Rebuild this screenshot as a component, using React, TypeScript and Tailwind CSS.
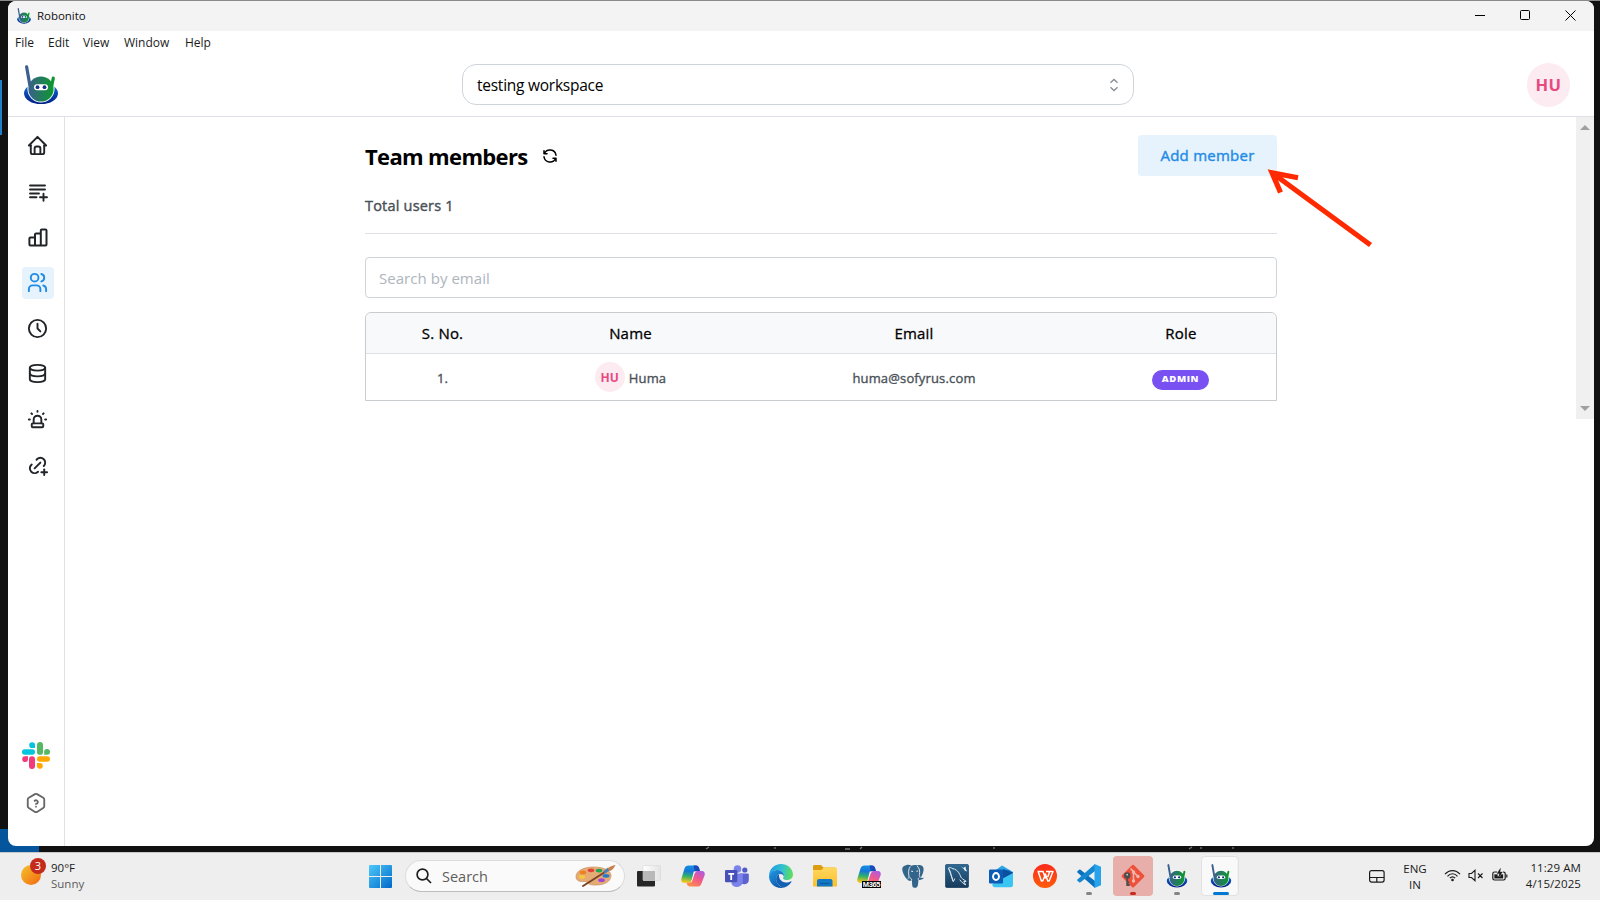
import React from 'react';
import { TbHome, TbUsers, TbClock, TbDatabase, TbUrgent, TbLinkPlus, TbHelpHexagon, TbRefresh } from 'react-icons/tb';

function Robot({ className }: { className: string }) {
  return (
    <svg className={className} viewBox="0 0 34 40" fill="none">
      <defs>
        <linearGradient id="head" x1="4" y1="0" x2="30" y2="0" gradientUnits="userSpaceOnUse">
          <stop stopColor="#3a5f8c" />
          <stop offset="1" stopColor="#0b9a2c" />
        </linearGradient>
        <linearGradient id="base" x1="0" y1="18" x2="0" y2="39" gradientUnits="userSpaceOnUse">
          <stop stopColor="#1473e0" />
          <stop offset="1" stopColor="#001f85" />
        </linearGradient>
      </defs>
      <ellipse cx="17" cy="28.3" rx="17" ry="10.8" fill="url(#base)" />
      <circle cx="17" cy="23.8" r="13.6" fill="#fff" />
      <path d="M2.6 1.8L6 21" stroke="#3b5f8f" strokeWidth="3.2" strokeLinecap="round" />
      <path d="M29.3 13l-2 10" stroke="#0f9430" strokeWidth="3.2" strokeLinecap="round" />
      <circle cx="17" cy="24" r="12.6" fill="url(#head)" />
      <rect x="10" y="19.2" width="14" height="6" rx="3" fill="#fff" />
      <circle cx="13.5" cy="22.2" r="1.9" fill="#12308a" />
      <circle cx="20.5" cy="22.2" r="1.9" fill="#12308a" />
    </svg>
  );
}

function PlaylistPlus() {
  return (
    <svg width="22" height="22" viewBox="0 0 22 22" fill="none" stroke="currentColor" strokeWidth="1.9" strokeLinecap="round">
      <path d="M3 4.500h15M3 8.500h15M3 12.500h9M3 16.200h6.500M16.500 12.800v7M13 16.300h7" />
    </svg>
  );
}

function Bars() {
  return (
    <svg width="22" height="22" viewBox="0 0 22 22" fill="none" stroke="currentColor" strokeWidth="2" strokeLinejoin="round">
      <path d="M2.400 12.400a1 1 0 0 1 1-1H8v8H3.400a1 1 0 0 1-1-1zM8 8.400a1 1 0 0 1 1-1h4.800v12H8zM13.800 4.400a1 1 0 0 1 1-1h3.700a1 1 0 0 1 1 1v14a1 1 0 0 1-1 1h-4.700z" />
    </svg>
  );
}

function Slack() {
  return (
    <svg width="28" height="27" viewBox="0 0 28 27">
      <g fill="#00c5dc">
        <rect x="0" y="7.200" width="13" height="5.600" rx="2.800" />
        <path d="M13 6H10.200a2.900 2.900 0 1 1 2.800-3z" />
      </g>
      <g fill="#54b962">
        <rect x="15" y="0" width="6" height="12.800" rx="2.900" />
        <path d="M22.200 12.800V10a2.900 2.900 0 1 1 3 2.800z" />
      </g>
      <g fill="#f23b7c">
        <rect x="7" y="14.200" width="6" height="12.800" rx="2.900" />
        <path d="M6 14.200V17a2.900 2.900 0 1 1-3-2.800z" />
      </g>
      <g fill="#ffa800">
        <rect x="15" y="14.200" width="13" height="5.600" rx="2.800" />
        <path d="M15 21h2.800a2.900 2.900 0 1 1-2.800 3z" />
      </g>
    </svg>
  );
}

function TaskView() {
  return (
    <svg width="24" height="24" viewBox="0 0 24 24">
      <defs><linearGradient id="tv" x2="1"><stop stopColor="#fff" /><stop offset="1" stopColor="#e4e4e4" /></linearGradient></defs>
      <rect x="0" y="6" width="18" height="15.500" rx="1" fill="#262626" />
      <rect x="6" y="0.500" width="17.500" height="15" rx="1" fill="url(#tv)" stroke="#d9d9d9" strokeWidth=".6" />
      <rect x="6" y="6" width="12" height="9.500" fill="#b9b9b9" />
    </svg>
  );
}

function CopilotMark() {
  return (
    <>
      <defs>
        <linearGradient id="cpa" x1="6" y1="1" x2="4" y2="18" gradientUnits="userSpaceOnUse">
          <stop stopColor="#1291e8" /><stop offset=".35" stopColor="#1478d4" /><stop offset=".65" stopColor="#2fb26a" /><stop offset="1" stopColor="#f5c518" />
        </linearGradient>
        <linearGradient id="cpb" x1="20" y1="6" x2="12" y2="23" gradientUnits="userSpaceOnUse">
          <stop stopColor="#a95bea" /><stop offset=".5" stopColor="#f0588c" /><stop offset="1" stopColor="#ff8a4a" />
        </linearGradient>
      </defs>
      <path d="M7.500 1.500H15c2 0 2.800 1.500 3.300 3.200l.6 2.300h-2.600c-2 0-2.900 1-3.500 3l-2 6.500c-.5 1.500-1.500 2.300-3 2.300H3.200C.8 18.800-.2 17 .4 14.600L3.500 4.600C4.100 2.600 5.500 1.500 7.500 1.500z" fill="url(#cpa)" />
      <path d="M12.600 1.500H15c2 0 2.800 1.500 3.300 3.200l.6 2.300h-2.600c-1 0-1.800.3-2.400 1z" fill="#1d48b8" />
      <path d="M16.500 22.500H9c-2 0-2.800-1.500-3.300-3.200l-.2-.5H7.700c2 0 2.900-1 3.500-3l2-6.500c.5-1.500 1.500-2.300 3-2.300h4.600c2.400 0 3.400 1.600 2.800 4.200l-3.100 8.200c-.6 2-2 3.100-4 3.100z" fill="url(#cpb)" />
      <path d="M12.800 7.500h3c-1.300.4-2 1.300-2.500 2.800l-1.900 6c-.4 1.300-1 2.200-2.200 2.500 1-1 1.300-2 1.700-3.500z" fill="#fff" />
    </>
  );
}

function Copilot() {
  return <svg width="24" height="24" viewBox="0 0 24 24"><CopilotMark /></svg>;
}

function M365() {
  return (
    <svg width="24" height="24" viewBox="0 0 24 24">
      <CopilotMark />
      <rect x="5" y="17" width="19" height="7" fill="#000" />
      <text x="5.800" y="23.200" fontSize="7.500" fontWeight="700" fill="#fff" textLength="17.500" fontFamily="Liberation Sans, sans-serif">M365</text>
    </svg>
  );
}

function Teams() {
  return (
    <svg width="24" height="24" viewBox="0 0 24 24">
      <circle cx="12.500" cy="5" r="3.800" fill="#7b83eb" />
      <circle cx="19.800" cy="6" r="2.600" fill="#5059c9" />
      <path d="M15 9.500h7.500A1.300 1.300 0 0 1 23.800 11v5a4.500 4.500 0 0 1-8.800 1z" fill="#5b62cf" />
      <path d="M6.500 9.500h11.300v7.300a6 6 0 0 1-11.300 3z" fill="#7b83eb" />
      <rect x="0" y="6" width="12.300" height="12.300" rx="1.200" fill="#4650b8" />
      <path d="M3.300 9h5.800v1.700H7.100v5.200H5.300v-5.200h-2z" fill="#fff" />
    </svg>
  );
}

function Edge() {
  return (
    <svg width="24" height="24" viewBox="0 0 24 24">
      <defs>
        <linearGradient id="ea" x1="1" y1="6" x2="24" y2="10" gradientUnits="userSpaceOnUse">
          <stop stopColor="#259be0" /><stop offset=".5" stopColor="#30c1d2" /><stop offset="1" stopColor="#63df55" />
        </linearGradient>
        <linearGradient id="eb" x1="2" y1="8" x2="14" y2="24" gradientUnits="userSpaceOnUse">
          <stop stopColor="#1d93df" /><stop offset="1" stopColor="#0b4f9e" />
        </linearGradient>
      </defs>
      <path d="M0 12C0 5 5.400 0 12 0s12 4.700 12 10.500c0 3.300-2.500 5.500-5.700 5.500-2.500 0-4.300-.8-4.300-1.800 0-.7 1-1 1-2.700C15 8.500 11.500 6 8 6 4 6 .8 8.800 0 12z" fill="url(#ea)" />
      <path d="M0 12.200C.5 9 3.500 6 8 6c3.600 0 7 2.500 7 5.500 0 .3 0 .6-.1.900-.7-1.600-2-2.400-3.500-2.400-2.400 0-4.300 2-4.300 5 0 4.500 4 9 9 8.300C14.800 23.800 13.500 24 12 24 5.200 24 0 18.600 0 12.200z" fill="url(#eb)" />
      <path d="M7.100 15c0-2.400 1.300-4 3-4.700-.8 3.700 1.900 8.200 6.900 8.200 2 0 3.600-.6 5-1.300.4-.2.700.2.500.5-1.400 2.300-3.600 4.500-6.400 5.600-5 .5-9-3.600-9-8.300z" fill="#1160b4" />
    </svg>
  );
}

function Folder() {
  return (
    <svg width="24" height="24" viewBox="0 0 24 24">
      <defs><linearGradient id="fo" y2="1" x2="0"><stop stopColor="#ffd75e" /><stop offset="1" stopColor="#fbbf2c" /></linearGradient></defs>
      <path d="M0 2.500C0 1.600.6 1 1.500 1H8l2.500 2.500H22V8H0z" fill="#dd9d10" />
      <path d="M0 6h8.500l2.300-2.500h11.700c.9 0 1.500.6 1.500 1.500v17.500H0z" fill="url(#fo)" />
      <path d="M4 22.500V17c0-1.200.8-2 2-2h11.500c1.200 0 2 .8 2 2v5.500z" fill="#1277c5" />
      <path d="M7 19.500h9.500" stroke="#0a5ba0" strokeWidth="1.200" />
    </svg>
  );
}

function Postgres() {
  return (
    <svg width="24" height="24" viewBox="0 0 24 24">
      <path d="M5 1.200c2-.6 4-.4 5.500.5C12 .9 14.500.8 16 1.400c2.500-.9 5.200-.3 6.300 2 .9 2.200-.3 6.600-2.500 10.200.8.500 2 .3 3 .2-.6 1.600-2.800 2.300-5.300 2.100-.4 2.400-.2 6.200-1.700 7.400-1.300.9-3.600.7-4.300-.9-.6-1.800-.3-4.300-.6-6.400-1.600 1.500-3.400.9-4.700-.6C4.100 13.600 1.200 8.300 1.200 5 1.200 3 3 1.600 5 1.200z" fill="#33658b" />
      <path d="M9.300 2.500C7.200 5 7.400 9.500 8 12.200c.3 1.200-.3 2-1.300 2.700M16.200 2c2.400 2.300 2.900 5.500 2.200 8.500-.3 1.300.4 2.200 1 3M10.700 16c-.2-1.300-.8-2-2-2.200M17.300 15.800c-.3-1 .2-1.800 1-2.200" fill="none" stroke="#eef2f5" strokeWidth=".9" />
      <path d="M10.200 7.200l1.800.3M15.500 7.300l1.600-.3" stroke="#eef2f5" strokeWidth="1" />
    </svg>
  );
}

function Mysql() {
  return (
    <svg width="24" height="24" viewBox="0 0 24 24" fill="none">
      <defs><linearGradient id="my" y2="1" x2="0"><stop stopColor="#2f6a93" /><stop offset="1" stopColor="#16395a" /></linearGradient></defs>
      <rect x=".3" y=".3" width="23.400" height="23.400" rx="2" fill="url(#my)" stroke="#123a5c" strokeWidth=".6" />
      <path d="M3.500 4c1.200-1 2.600-.6 3.500.5 3.800.3 6.200 2.700 7.800 6 .8 1.800 1.200 3.600 3 4.600l3.400 2.200-2.500.3 2 3.200c-2.700-1-4.300-3-6-5.200M8.300 17.500c-1.300-1.600-1-3.800-2-6C5.500 9.500 5.800 8.500 5.300 7.500 4.600 6.500 4 5.500 3.500 4z M8.300 17.500c.8-1 1-1.900 1.400-3" stroke="#dce8f0" strokeWidth="1" />
      <path d="M16 2.800l2.500 1.200 2-1.500.2 2.500 1.500 2.500-2.500-1-.8-1.500z" fill="#fff" />
    </svg>
  );
}

function Outlook() {
  return (
    <svg width="24" height="24" viewBox="0 0 24 24">
      <path d="M3.500 8.500L13 1.500l11 6.500v5H3.500z" fill="#2aa3e8" />
      <path d="M7 6h14v12H7z" fill="#1681d8" />
      <path d="M14 5l10 3.500V14l-10 6z" fill="#0c4f9f" />
      <path d="M3.500 20l20.500-11v12a2.300 2.300 0 0 1-2.300 2.300H6A2.500 2.500 0 0 1 3.500 20z" fill="#39c4f2" />
      <rect x="0" y="5.500" width="14" height="14" rx="1.200" fill="#0c5cb5" />
      <ellipse cx="7" cy="12.500" rx="3" ry="3.500" fill="none" stroke="#fff" strokeWidth="1.900" />
    </svg>
  );
}

function Wps() {
  return (
    <svg width="24" height="24" viewBox="0 0 24 24" fill="none">
      <defs><linearGradient id="wp" y2="1" x2="0"><stop stopColor="#fb2a1c" /><stop offset="1" stopColor="#ff5c0a" /></linearGradient></defs>
      <circle cx="12" cy="12" r="12" fill="url(#wp)" />
      <path d="M4.500 7.500h6M12 11.500L9.700 17H8.400L5.300 8M10 7.500l2.600 7M13 7.500h7L16.200 17h-1.400l-2.600-7.500M16.500 8l-1.700 5" stroke="#fff" strokeWidth="1.500" strokeLinejoin="round" />
    </svg>
  );
}

function VsCode() {
  return (
    <svg width="24" height="24" viewBox="0 0 24 24">
      <path d="M.4 7.300L2.200 5.800c.4-.3.900-.3 1.300 0L18 17v7L.4 8.400c-.3-.3-.3-.8 0-1.100z" fill="#0a71bd" />
      <path d="M.4 16.700l1.800 1.500c.4.300.9.300 1.300 0L18 7V0L.4 15.600c-.3.300-.3.800 0 1.100z" fill="#1387cf" />
      <path d="M17.500.1L24 2.800v18.400l-6.500 2.700z" fill="#27a3ee" />
    </svg>
  );
}

function Git() {
  return (
    <svg width="24" height="24" viewBox="0 0 24 24" fill="none">
      <rect x="3.700" y="3.700" width="16.800" height="16.800" rx="1.500" transform="rotate(45 12 12)" fill="#ee513b" />
      <path d="M9.500 4.500l3 3v10M12.500 8l4.500 4.500" stroke="#f2b7ad" strokeWidth="1.500" />
      <circle cx="12.500" cy="8" r="1.700" fill="#f2b7ad" /><circle cx="12.500" cy="17" r="1.700" fill="#f2b7ad" /><circle cx="17" cy="12.500" r="1.700" fill="#f2b7ad" />
      <circle cx="6.200" cy="11.500" r="3.200" fill="#4d4d4d" />
      <path d="M6.200 13v9M6.200 21h2.500M6.200 18.500h2" stroke="#4d4d4d" strokeWidth="1.800" />
      <circle cx="6.200" cy="10.700" r=".9" fill="#cfcfcf" />
    </svg>
  );
}

function Palette() {
  return (
    <svg width="42" height="24" viewBox="0 0 42 24" fill="none">
      <path d="M18 3C8.500 3 1 7 1 12.500 1 17 5 18 9 17.500c3-.3 3.500 1.500 5 2.500 2 1.200 5 1.200 8.500 1C30 20.500 36 17.500 36 11.500 36 6 28 3 18 3z" fill="#e5ab74" stroke="#c98a52" strokeWidth=".6" />
      <ellipse cx="8" cy="8.500" rx="3.300" ry="1.900" fill="#f08022" />
      <ellipse cx="16" cy="6.300" rx="3.300" ry="1.900" fill="#e2413a" />
      <ellipse cx="24" cy="6.600" rx="3.300" ry="1.900" fill="#22a355" />
      <ellipse cx="31" cy="11.800" rx="3.500" ry="1.900" fill="#2678c8" />
      <ellipse cx="26.500" cy="16.200" rx="3.300" ry="1.900" fill="#a145d8" />
      <ellipse cx="7" cy="12.800" rx="3" ry="1.900" fill="#f6cb38" />
      <path d="M8 22L30 8" stroke="#7a4326" strokeWidth="1.900" strokeLinecap="round" />
      <path d="M29 8.500l5-3.600" stroke="#4f7fb0" strokeWidth="3.200" />
      <path d="M32.500 4.500c2-2 5-2.800 8-3.500-1 2.500-3 5-5.500 6z" fill="#c9804a" />
    </svg>
  );
}

function Slot({ children, mark }: { children: React.ReactNode; mark?: string }) {
  return (
    <div className="flex h-10 w-10 flex-col items-center pt-2">
      {children}
      {mark && <div className={`mt-[4px] h-[3px] w-[6px] rounded-full ${mark}`} />}
    </div>
  );
}

const navIcons = [
  <TbHome size={23} className="mb-px" />, <PlaylistPlus />, <Bars />, <TbUsers size={23} />,
  <TbClock size={23} />, <TbDatabase size={23} />, <TbUrgent size={23} />, <TbLinkPlus size={23} />,
];

function WindowTitle() {
  return (
    <div className="flex h-[30px] items-center bg-[#f3f3f3] pl-[9px]">
      <Robot className="mb-px h-4 w-[14px]" />
      <span className="ml-[6px] text-[11.500px] leading-4 tracking-[-0.05px] text-[#111]">Robonito</span>
      <div className="mr-[18px] mb-[2px] ml-auto flex items-center gap-[35px]">
        <svg width="10" height="10"><path d="M0 5.500h10" stroke="#000" /></svg>
        <svg width="10" height="10"><rect x=".5" y=".5" width="9" height="9" rx="1" fill="none" stroke="#000" /></svg>
        <svg width="11" height="11"><path d="M.5.500l10 10M10.500.500l-10 10" stroke="#000" /></svg>
      </div>
    </div>
  );
}

function Menu() {
  return (
    <div className="flex h-[23px] items-center pl-[7px] text-[12px] text-[#1b1b1b]">
      <span className="w-[33px]">File</span>
      <span className="w-[35px]">Edit</span>
      <span className="w-[41px]">View</span>
      <span className="w-[61px]">Window</span>
      <span>Help</span>
    </div>
  );
}

function Header() {
  return (
    <header className="flex h-[63px] items-start border-b border-[#dee2e6]">
      <Robot className="mt-[11px] ml-4 h-10 w-[34px]" />
      <div className="mt-[10px] ml-[404px] flex h-[41px] w-[672px] items-center justify-between rounded-[14px] border border-[#ced4da] px-[14px]">
        <span className="pt-[2px] text-[15.500px] tracking-[-0.250px] text-black">testing workspace</span>
        <svg width="10" height="14" viewBox="0 0 10 14" fill="none" stroke="#868e96" strokeWidth="1.300">
          <path d="M1.500 4.800L5 1.500l3.500 3.300M1.500 9.200L5 12.500l3.500-3.300" />
        </svg>
      </div>
      <div className="mt-[9px] ml-[393px] flex h-[44px] w-[43px] items-center justify-center rounded-full bg-[#fcebf1] pt-px text-[16.500px] font-bold tracking-[0.4px] text-[#e64980]">HU</div>
    </header>
  );
}

function Sidebar() {
  return (
    <aside className="flex w-[57px] shrink-0 flex-col border-r border-[#dee2e6] pt-[13px] text-[#212529]">
      <nav className="ml-[14px] flex flex-col gap-[13.600px]">
        {navIcons.map((icon, i) => (
          <div key={i} className={i === 3 ? 'flex h-8 w-8 items-center justify-center rounded bg-[#e7f3fc] pr-px text-[#228be6]' : 'flex h-8 w-8 items-center justify-center pr-px'}>{icon}</div>
        ))}
      </nav>
      <div className="mt-auto mb-[32px] flex flex-col items-center gap-[23px] text-[#666]">
        <Slack />
        <TbHelpHexagon size={22} />
      </div>
    </aside>
  );
}

function Members() {
  return (
    <main className="w-[912px] pt-[18px]">
      <div className="flex h-[41px] items-center">
        <h1 className="text-[22px] leading-8 font-bold tracking-[-0.650px] text-black">Team members</h1>
        <TbRefresh size={18} className="ml-[13px] text-black" />
        <button className="ml-auto h-[41px] w-[139px] rounded bg-[#e7f3fc] text-[15px] tracking-[0.250px] text-[#228be6] [-webkit-text-stroke:0.4px]">Add member</button>
      </div>
      <div className="mt-[18px] h-[40px] border-b border-[#dee2e6] text-[14.500px] leading-6 tracking-[0.200px] text-[#495057] [-webkit-text-stroke:0.4px]">Total users 1</div>
      <input className="mt-[23px] block h-[41px] w-full rounded border border-[#ced4da] px-[13px] text-[15px] tracking-[0.040px] outline-none placeholder:text-[#adb5bd]" placeholder="Search by email" />
      <div className="mt-[14px] rounded-t-md border border-[#c9cccf]">
        <div className="grid h-[41px] grid-cols-[153px_223px_344px_190px] items-center rounded-t-md border-b border-[#dee2e6] bg-[#f8f9fb] text-center text-[15px] tracking-[0.200px] text-black [-webkit-text-stroke:0.3px]">
          <span>S. No.</span><span>Name</span><span>Email</span><span>Role</span>
        </div>
        <div className="grid h-[46px] grid-cols-[153px_223px_344px_190px] items-center text-center text-[13px] tracking-[0.150px] text-[#495057] [-webkit-text-stroke:0.35px]">
          <span className="pt-[3px]">1.</span>
          <div className="flex items-center justify-center gap-1">
            <div className="flex h-[30px] w-[30px] items-center justify-center rounded-full bg-[#fcebf1] pt-px text-[12px] font-bold text-[#e64980] [-webkit-text-stroke:0px]">HU</div>
            <span className="pt-[3px]">Huma</span>
          </div>
          <span className="pt-[3px]">huma@sofyrus.com</span>
          <div className="mt-[5px] ml-[66px] flex h-5 w-[57px] items-center justify-center rounded-full bg-[#7950f2] text-[9.500px] font-extrabold tracking-[0.600px] text-white [-webkit-text-stroke:0px]">ADMIN</div>
        </div>
      </div>
    </main>
  );
}

function Scrollbar() {
  return (
    <div className="ml-auto flex h-[302px] w-[18px] flex-col items-center justify-between bg-[#f0f0f0] py-2">
      <svg width="10" height="5"><path d="M0 5l5-5 5 5z" fill="#a0a0a0" /></svg>
      <svg width="10" height="5"><path d="M0 0l5 5 5-5z" fill="#a0a0a0" /></svg>
    </div>
  );
}

function Taskbar() {
  return (
    <footer className="flex h-12 items-start border-t border-[#c8c8c8] bg-[#eee] text-[12px]">
      <div className="relative ml-[21px] mt-[12px] h-5 w-5 rounded-full bg-gradient-to-br from-[#f0c22c] to-[#f2640f]">
        <span className="absolute -top-[7px] left-[9px] flex h-4 w-4 items-center justify-center rounded-full bg-[#c42b1c] text-[11px] text-white">3</span>
      </div>
      <div className="ml-[10px] mt-[7px] w-[318px] text-[11.500px] leading-4">
        <div className="text-[#1b1b1b]">90°F</div>
        <div className="text-[#5c5c5c]">Sunny</div>
      </div>
      <svg className="mt-3" width="23" height="23" viewBox="0 0 23 23">
        <defs><linearGradient id="win" x1="0" y1="0" x2="23" y2="23" gradientUnits="userSpaceOnUse"><stop stopColor="#4cc9fb" /><stop offset="1" stopColor="#0068c9" /></linearGradient></defs>
        <path d="M1 0h10v11H0V1a1 1 0 0 1 1-1zM12 0h10a1 1 0 0 1 1 1v10H12zM0 12h11v11H1a1 1 0 0 1-1-1zM12 12h11v10a1 1 0 0 1-1 1H12z" fill="url(#win)" />
      </svg>
      <div className="ml-[13px] mt-[7px] flex h-8 w-[220px] items-center rounded-full border border-[#dcdcdc] border-b-[#bdbdbd] bg-[#fafafa] pl-[10px]">
        <svg width="16" height="16" viewBox="0 0 16 16" fill="none" stroke="#1f1f1f" strokeWidth="1.700"><circle cx="6.500" cy="6.500" r="5.400" /><path d="M10.500 10.500l4.500 4.500" /></svg>
        <span className="ml-[10px] pt-px text-[14.500px] text-[#5e5e5e]">Search</span>
        <div className="mr-[7px] ml-auto"><Palette /></div>
      </div>
      <div className="mt-[3px] ml-1 flex gap-1">
        <Slot><div className="pt-px"><TaskView /></div></Slot>
        <Slot><Copilot /></Slot>
        <Slot><Teams /></Slot>
        <Slot><Edge /></Slot>
        <Slot><Folder /></Slot>
        <Slot><M365 /></Slot>
        <Slot><Postgres /></Slot>
        <Slot><Mysql /></Slot>
        <Slot><Outlook /></Slot>
        <Slot><Wps /></Slot>
        <Slot mark="bg-[#868686]"><VsCode /></Slot>
        <div className="rounded bg-[#e8aeaa]"><Slot mark="bg-[#c42b1c]"><Git /></Slot></div>
        <Slot mark="bg-[#868686]"><Robot className="h-6 w-[22px]" /></Slot>
        <div className="flex h-10 w-[38px] flex-col rounded border border-[#e2e2e2] bg-[#f2f2f2]">
          <div className="flex h-[38px] w-[35px] flex-col items-center rounded bg-[#f9f9f9] pt-[7px] pl-[2px]">
            <Robot className="h-6 w-[22px]" />
            <div className="mt-1 h-[3px] w-4 shrink-0 rounded-full bg-[#0078d4]" />
          </div>
        </div>
      </div>
      <div className="ml-auto flex items-start text-[#1b1b1b]">
        <svg className="mt-[17px]" width="16" height="13" viewBox="0 0 16 13" fill="none" stroke="#1b1b1b" strokeWidth="1.200"><rect x=".6" y=".6" width="14.500" height="11.500" rx="2" /><path d="M.6 7.500h14.500M7.800 7.500v4.500" /></svg>
        <div className="mt-[8px] ml-[14px] w-8 text-center text-[11.500px] leading-4">ENG<br />IN</div>
        <svg className="mt-[16px] ml-[13px]" width="17" height="13" viewBox="0 0 17 13" fill="none" stroke="#1b1b1b" strokeWidth="1.200">
          <path d="M1 5.200c4.200-4.900 10.800-4.900 15 0M3.500 7.300c2.900-3.400 7.100-3.400 10 0M5.900 9.200c1.600-1.900 3.600-1.900 5.200 0" /><circle cx="8.500" cy="11" r="1.300" fill="#1b1b1b" stroke="none" />
        </svg>
        <svg className="mt-[16px] ml-[7px]" width="16" height="13" viewBox="0 0 16 13" fill="none" stroke="#1b1b1b" strokeWidth="1.100"><path d="M1 4.500h2.500L7 1.300v10.400L3.500 8.500H1zM10 4.500l4.500 4.500M14.500 4.500L10 9" /></svg>
        <svg className="mt-[15px] ml-2" width="16" height="15" viewBox="0 0 16 15" fill="none" stroke="#1b1b1b" strokeWidth="1.200"><path d="M5 4H2.500C1.500 4 .8 4.700.8 5.700v4.600c0 1 .7 1.700 1.700 1.700h9c1 0 1.700-.7 1.700-1.700V5.700c0-1-.7-1.700-1.700-1.700H11M14.800 6.500v3" /><path d="M2.500 6.500h3v2h3v-2h2.500v3.800H2.500zM8.500.3L5 5.500h2.300L6.700 9l3.800-5H8z" fill="#1b1b1b" strokeWidth=".3" /></svg>
        <div className="mt-[7px] mr-[19px] ml-px w-[72px] text-right text-[11.500px] leading-4 tracking-[0.080px] whitespace-nowrap">11:29 AM<br />4/15/2025</div>
      </div>
    </footer>
  );
}

export default function App() {
  return (
    <div className="relative flex h-[900px] w-[1600px] flex-col overflow-hidden border-t border-[#8a8a8a] bg-[#111] font-['Open_Sans','Noto_Sans',sans-serif]">
      <div className="flex h-[851px]">
        <div className="flex w-2 flex-col justify-between pt-[79px]">
          <div className="h-[55px] w-[2px] bg-[#1f7fc8]" />
          <div className="h-[23px] w-[39px] bg-[#04559c]" />
        </div>
        <div className="z-10 flex h-[845px] w-[1586px] flex-col overflow-hidden rounded-[8px] bg-white">
          <WindowTitle />
          <Menu />
          <Header />
          <div className="flex flex-1">
            <Sidebar />
            <div className="flex flex-1 pl-[300px]">
              <Members />
              <Scrollbar />
            </div>
          </div>
        </div>
      </div>
      <Taskbar />
      <svg className="pointer-events-none absolute top-[845px] left-0" width="1600" height="6" stroke="#777" strokeWidth="1.300">
        <path d="M706 3l3-2M775 1v2M845 3h5M860 3l2-2M994 1v2M1189 3l3-2M1201 1v2M1233 1v2" />
      </svg>
      <svg className="pointer-events-none absolute top-[160px] left-[1261px] z-20" width="120" height="95" fill="none" stroke="#ff2a00" strokeWidth="5.200">
        <path d="M109.500 84L12 12.500M37 16.800L11 11.800 19.500 31.500" />
      </svg>
    </div>
  );
}
